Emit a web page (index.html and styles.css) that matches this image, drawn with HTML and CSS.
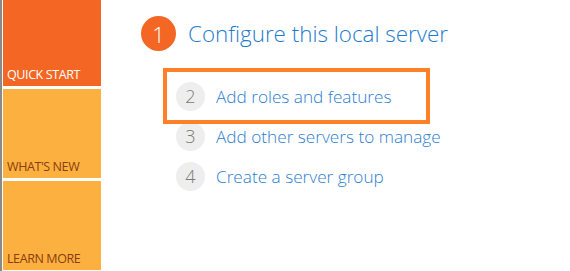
FILE: index.html
```html
<!DOCTYPE html>
<html lang="en">
<head>
  <meta charset="UTF-8">
  <title>Server Manager - Welcome</title>
  <link rel="stylesheet" href="styles.css">
</head>
<body>

  <div class="sidebar">
    <div class="tile active">QUICK START</div>
    <div class="tile">WHAT'S NEW</div>
    <div class="tile">LEARN MORE</div>
  </div>

  <div class="main">
    <div class="step-head">
      <span class="num big">1</span>
      <span class="head-text">Configure this local server</span>
    </div>

    <div class="steps">
      <div class="step highlight">
        <span class="num">2</span>
        <span class="step-text">Add roles and features</span>
      </div>
      <div class="step">
        <span class="num">3</span>
        <span class="step-text">Add other servers to manage</span>
      </div>
      <div class="step">
        <span class="num">4</span>
        <span class="step-text">Create a server group</span>
      </div>
    </div>
  </div>

</body>
</html>
```

FILE: styles.css
```css
* {
  margin: 0;
  padding: 0;
  box-sizing: border-box;
  font-family: "Open Sans", "Noto Sans", sans-serif;
}

body {
  display: flex;
  height: 271px;
  background: white;
  overflow: hidden;
}

.sidebar {
  width: 101px;
  flex-shrink: 0;
  border-left: 2px solid #8a8a8a;
  padding-left: 1px;
  display: flex;
  flex-direction: column;
  gap: 2.5px;
}

.tile {
  height: 89.5px;
  background-color: #fcb040;
  color: #8a3d10;
  font-size: 12.5px;
  letter-spacing: -0.4px;
  white-space: nowrap;
  display: flex;
  align-items: flex-end;
  padding: 0 0 3px 4px;
}

.tile:first-child {
  height: 86px;
}

.tile.active {
  background-color: #f36623;
  color: white;
}

.main {
  flex-grow: 1;
  padding: 16px 0 0 40px;
}

.step-head {
  display: flex;
  align-items: center;
  gap: 12px;
}

.num {
  width: 29px;
  height: 29px;
  flex-shrink: 0;
  border-radius: 50%;
  background: #eeeeee;
  color: #7a7a7a;
  font-size: 18px;
  font-weight: 300;
  display: flex;
  align-items: center;
  justify-content: center;
}

.num.big {
  width: 35px;
  height: 35px;
  background: #f36623;
  color: white;
  font-size: 22px;
}

.head-text {
  color: #1f7bcc;
  font-size: 22.4px;
  font-weight: 300;
  white-space: nowrap;
}

.steps {
  margin-top: 25px;
  margin-left: 30px;
  width: 251px;
}

.step {
  height: 40px;
  display: flex;
  align-items: center;
  gap: 11px;
  padding-left: 5px;
}

.step.highlight {
  outline: 4px solid #ff8027;
  outline-offset: 4px;
}

.step-text {
  color: #2e80d0;
  font-size: 17.2px;
  font-weight: 300;
  white-space: nowrap;
}
```
